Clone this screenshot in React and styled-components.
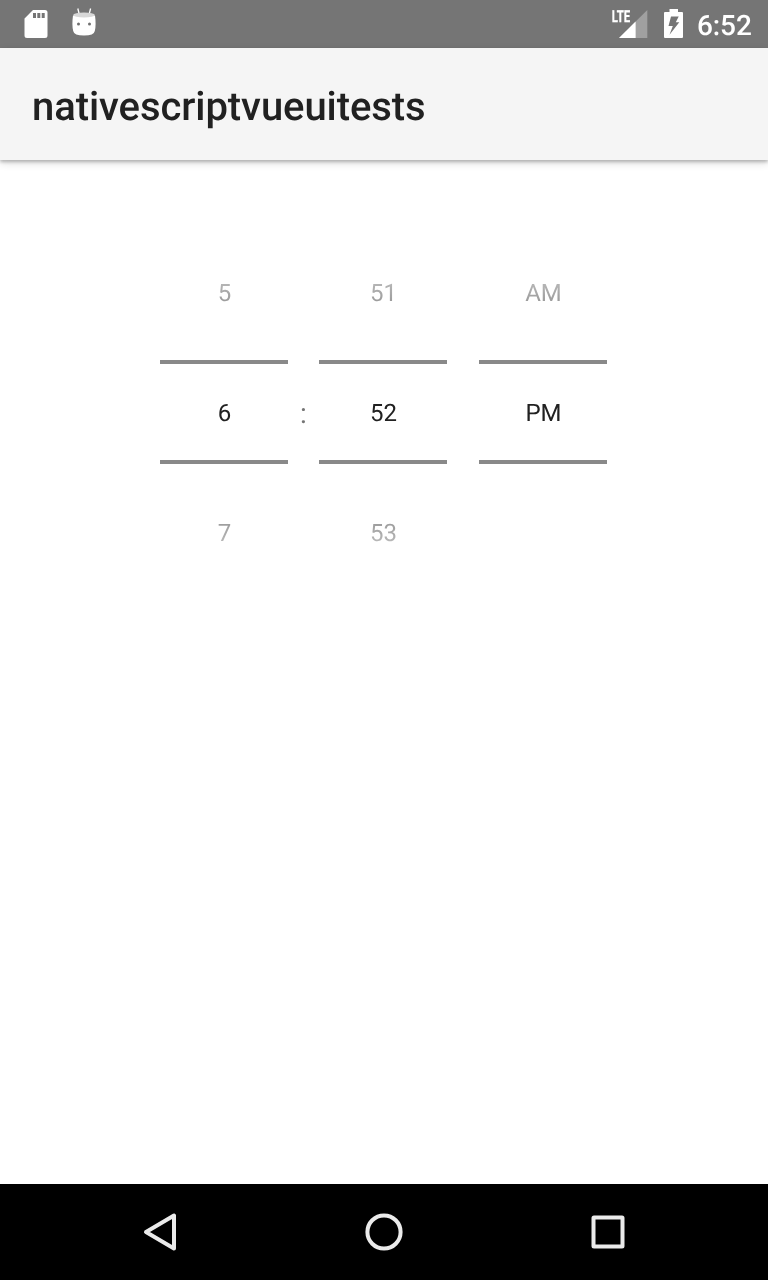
import React from "react";
import styled, { createGlobalStyle } from "styled-components";

const GlobalStyle = createGlobalStyle`
  body { margin: 0; background: #fff; }
`;

const Screen = styled.div`
  display: flex;
  flex-direction: column;
  width: 768px;
  height: 1280px;
  background: #fff;
  color: #212121;
  font-family: Roboto, sans-serif;
  text-rendering: geometricPrecision;
  overflow: hidden;
`;

const StatusBar = styled.header`
  display: flex;
  justify-content: space-between;
  flex: none;
  height: 48px;
  background: #757575;
`;

const StatusGroup = styled.div`
  display: flex;
  height: 48px;
  will-change: opacity;
`;

const Clock = styled.time`
  width: 71px;
  line-height: 52px;
  font-size: 28px;
  font-weight: 500;
  letter-spacing: -0.1px;
  color: #fff;
`;

const ActionBar = styled.div`
  flex: none;
  box-sizing: border-box;
  height: 112px;
  padding: 0 32px;
  background: #f5f5f5;
  box-shadow: 0 2px 3px rgba(0, 0, 0, 0.22), 0 3px 8px rgba(0, 0, 0, 0.14);
`;

const Title = styled.h1`
  margin: 0;
  font-size: 40px;
  font-weight: 500;
  line-height: 118px;
  letter-spacing: -0.07px;
  will-change: opacity;
`;

const Content = styled.main`
  flex: 1;
  display: flex;
  align-items: flex-start;
  padding: 72px 0 0 160px;
  will-change: opacity;
`;

const Picker = styled.div`
  width: 128px;
  margin-right: ${(p) => p.$gap || 0}px;
`;

const Neighbour = styled.div`
  display: flex;
  align-items: ${(p) => (p.$below ? "flex-end" : "flex-start")};
  height: 128px;
  mask-image: linear-gradient(
    ${(p) => (p.$below ? "to top" : "to bottom")},
    transparent,
    rgba(0, 0, 0, 0.82)
  );
`;

const Value = styled.span`
  display: block;
  box-sizing: border-box;
  width: 100%;
  padding-left: 1px;
  height: ${(p) => p.$height}px;
  line-height: ${(p) => p.$height + 2}px;
  font-size: 24px;
  text-align: center;
`;

const Selected = styled.div`
  height: 96px;
  border: solid #898989;
  border-width: 4px 0;
`;

const Separator = styled.span`
  width: 31px;
  text-align: center;
  font-size: 28px;
  line-height: 364px;
  color: #757575;
`;

const NavBar = styled.nav`
  display: flex;
  justify-content: center;
  align-items: center;
  gap: 128px;
  flex: none;
  height: 96px;
  background: #000;
`;

const NavButton = styled.button`
  width: 96px;
  height: 96px;
  padding: 0;
  border: 0;
  background: none;
  svg { display: block; }
`;

function Wheel({ previous, value, next, gap }) {
  return (
    <Picker $gap={gap}>
      <Neighbour><Value $height={120}>{previous}</Value></Neighbour>
      <Selected><Value $height={96}>{value}</Value></Selected>
      <Neighbour $below><Value $height={120}>{next}</Value></Neighbour>
    </Picker>
  );
}

function NavIcon({ children }) {
  return (
    <svg width="96" height="96" fill="none" stroke="#ebebeb" strokeWidth="4" strokeLinejoin="round">
      {children}
    </svg>
  );
}

export default function App() {
  return (
    <>
      <GlobalStyle />
      <Screen>
        <StatusBar>
          <StatusGroup>
            <svg width="120" height="48" aria-hidden="true">
              <path
                fill="#fff"
                fillRule="evenodd"
                d="M33 10H45Q47.5 10 47.5 12.5V35.5Q47.5 38 45 38H27Q24.5 38 24.5 35.5V18.5ZM33 13V18H36V13ZM37.3 13V18H40.3V13ZM41.7 13V18H44.7V13Z"
              />
              <path d="M77.8 8.5L79.2 14M90.6 8.5L89.2 14" stroke="#fff" strokeWidth="1.3" />
              <path
                fill="#fff"
                d="M73 15.5L95 15.5Q96.3 25 94.8 31Q94 35.6 84 35.6Q74 35.6 73.2 31Q71.7 25 73 15.5Z"
              />
              <ellipse cx="84" cy="15" rx="10.8" ry="2.6" fill="#d8d8d8" />
              <circle cx="78.5" cy="24" r="1.5" fill="#707070" />
              <circle cx="89.5" cy="24" r="1.5" fill="#707070" />
            </svg>
          </StatusGroup>
          <StatusGroup>
            <svg width="97" height="48" aria-label="LTE signal, battery charging" viewBox="600 0 97 48">
              <path d="M647.3 10V38H619Z" fill="#a0a0a0" />
              <path d="M635.6 21.4V38H619Z" fill="#fff" />
              <text
                x="611.8"
                y="22.2"
                fill="#fff"
                stroke="#fff"
                strokeWidth="0.25"
                fontSize="16.5"
                fontWeight="700"
                textLength="18.4"
                lengthAdjust="spacingAndGlyphs"
              >
                LTE
              </text>
              <path
                fill="#fff"
                fillRule="evenodd"
                d="M669.5 9H678V12H682Q683 12 683 13V37Q683 38 682 38H665Q664 38 664 37V13Q664 12 665 12H669.5ZM671 16.5L668.5 26H672.8L669.5 34.7L679.3 22.3H675.8L678.7 16.5Z"
              />
            </svg>
            <Clock>6:52</Clock>
          </StatusGroup>
        </StatusBar>
        <ActionBar>
          <Title>nativescriptvueuitests</Title>
        </ActionBar>
        <Content>
          <Wheel previous="5" value="6" next="7" />
          <Separator>:</Separator>
          <Wheel previous="51" value="52" next="53" gap={32} />
          <Wheel previous="AM" value="PM" next="" />
        </Content>
        <NavBar>
          <NavButton aria-label="Back">
            <NavIcon><path d="M62 31.5V64.5L34 48Z" /></NavIcon>
          </NavButton>
          <NavButton aria-label="Home">
            <NavIcon><circle cx="48" cy="48" r="16.6" /></NavIcon>
          </NavButton>
          <NavButton aria-label="Recent apps">
            <NavIcon><rect x="33.5" y="33.5" width="29" height="29" rx="0.5" /></NavIcon>
          </NavButton>
        </NavBar>
      </Screen>
    </>
  );
}
